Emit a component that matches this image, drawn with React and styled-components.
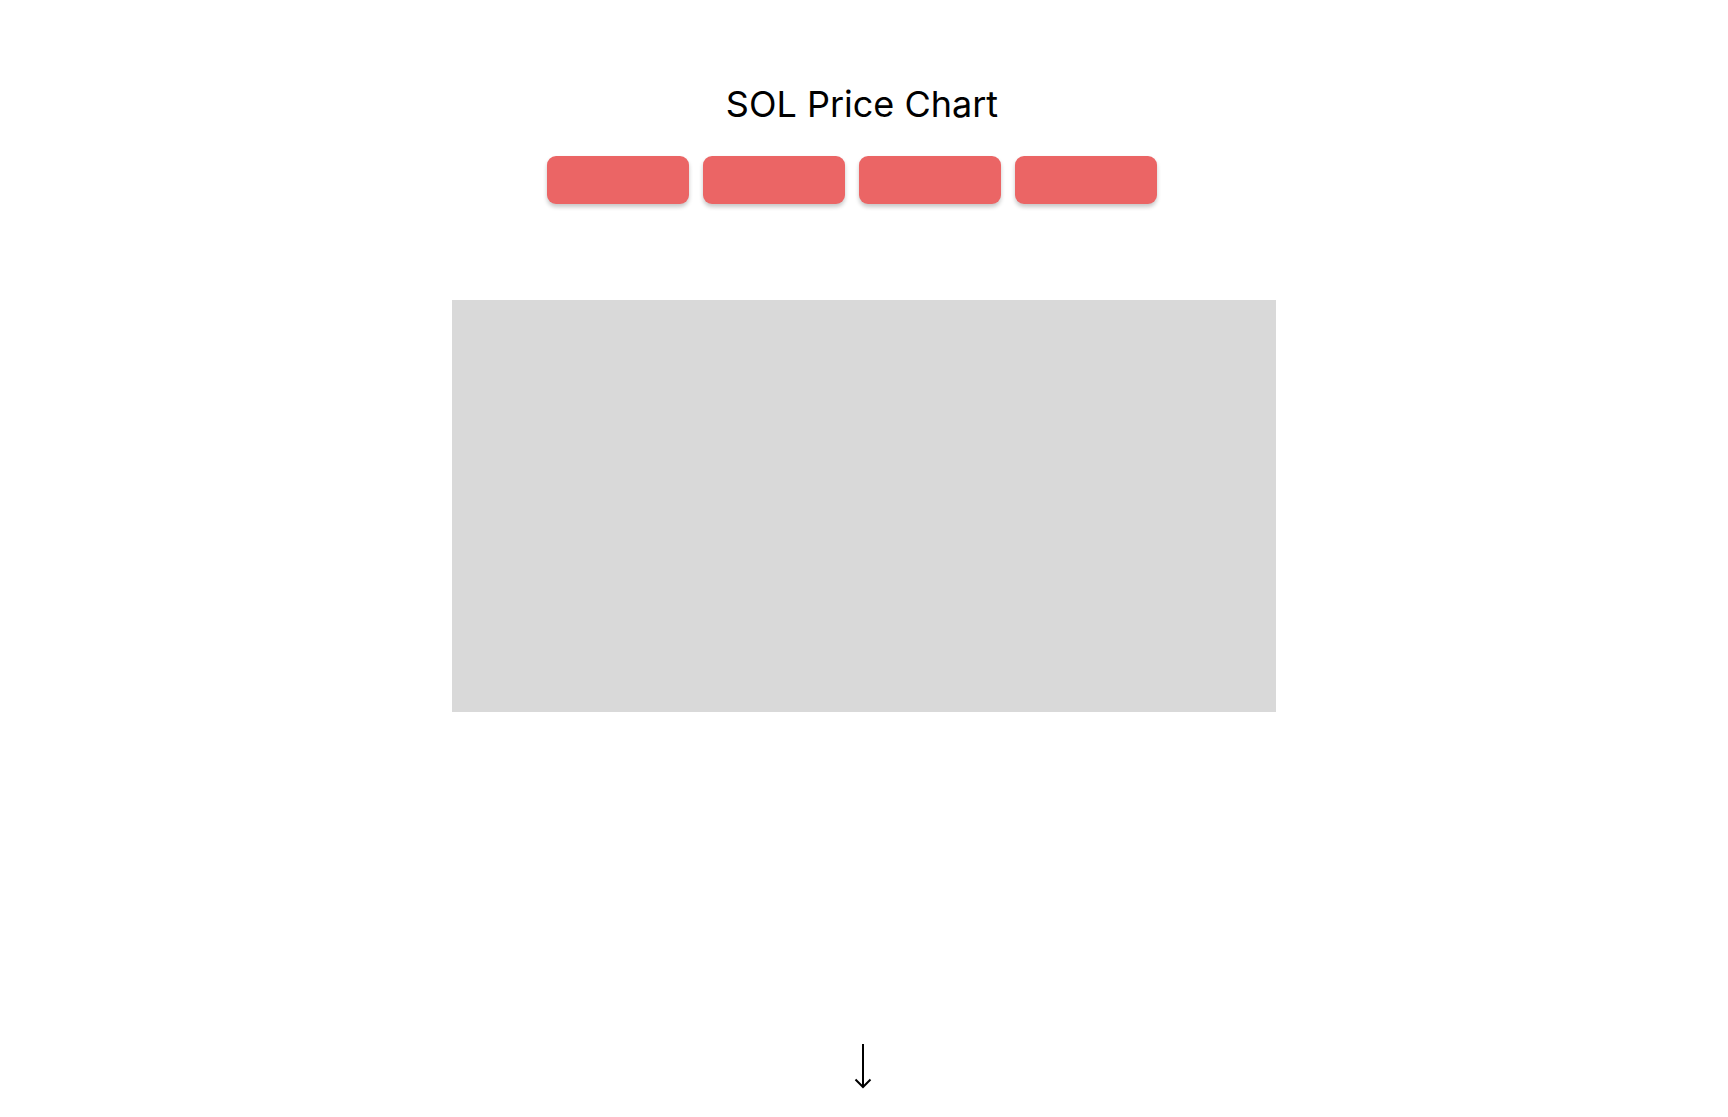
import React from 'react';
import styled, { createGlobalStyle } from 'styled-components';

const GlobalStyle = createGlobalStyle`
  body {
    margin: 0;
    background: #ffffff;
    font-family: Inter, "Noto Sans", sans-serif;
  }
`;

const Page = styled.div`
  min-height: 1117px;
  display: flex;
  flex-direction: column;
  align-items: center;
  padding-top: 82px;
  box-sizing: border-box;
`;

const Title = styled.h1`
  margin: 0;
  font-size: 36px;
  font-weight: 400;
  line-height: 44px;
  color: #000;
  transform: translateX(-2px);
`;

const RangeBar = styled.div`
  display: flex;
  gap: 14px;
  margin-top: 30px;
  margin-right: 24px;
`;

const RangeButton = styled.button`
  width: 142px;
  height: 48px;
  border: none;
  border-radius: 9px;
  background: #eb6565;
  box-shadow: 0 3px 4px rgba(0, 0, 0, 0.22);
  cursor: pointer;
`;

const ChartBox = styled.div`
  width: 824px;
  height: 412px;
  margin-top: 96px;
  background: #d9d9d9;
`;

const ScrollHint = styled.div`
  margin-top: 332px;
  margin-right: 2px;
  width: 18px;
  height: 46px;
  display: flex;
  justify-content: center;
`;

const ranges = ['1D', '1W', '1M', '1Y'];

const App = () => {
  return (
    <Page>
      <GlobalStyle />
      <Title>SOL Price Chart</Title>
      <RangeBar>
        {ranges.map((r) => (
          <RangeButton key={r} aria-label={r} />
        ))}
      </RangeBar>
      <ChartBox />
      <ScrollHint>
        <svg width="18" height="46" viewBox="0 0 18 46" fill="none">
          <path d="M9 0 V43" stroke="#000" strokeWidth="2" />
          <path d="M1.5 35.5 L9 43 L16.5 35.5" stroke="#000" strokeWidth="2" />
        </svg>
      </ScrollHint>
    </Page>
  );
};

export default App;
